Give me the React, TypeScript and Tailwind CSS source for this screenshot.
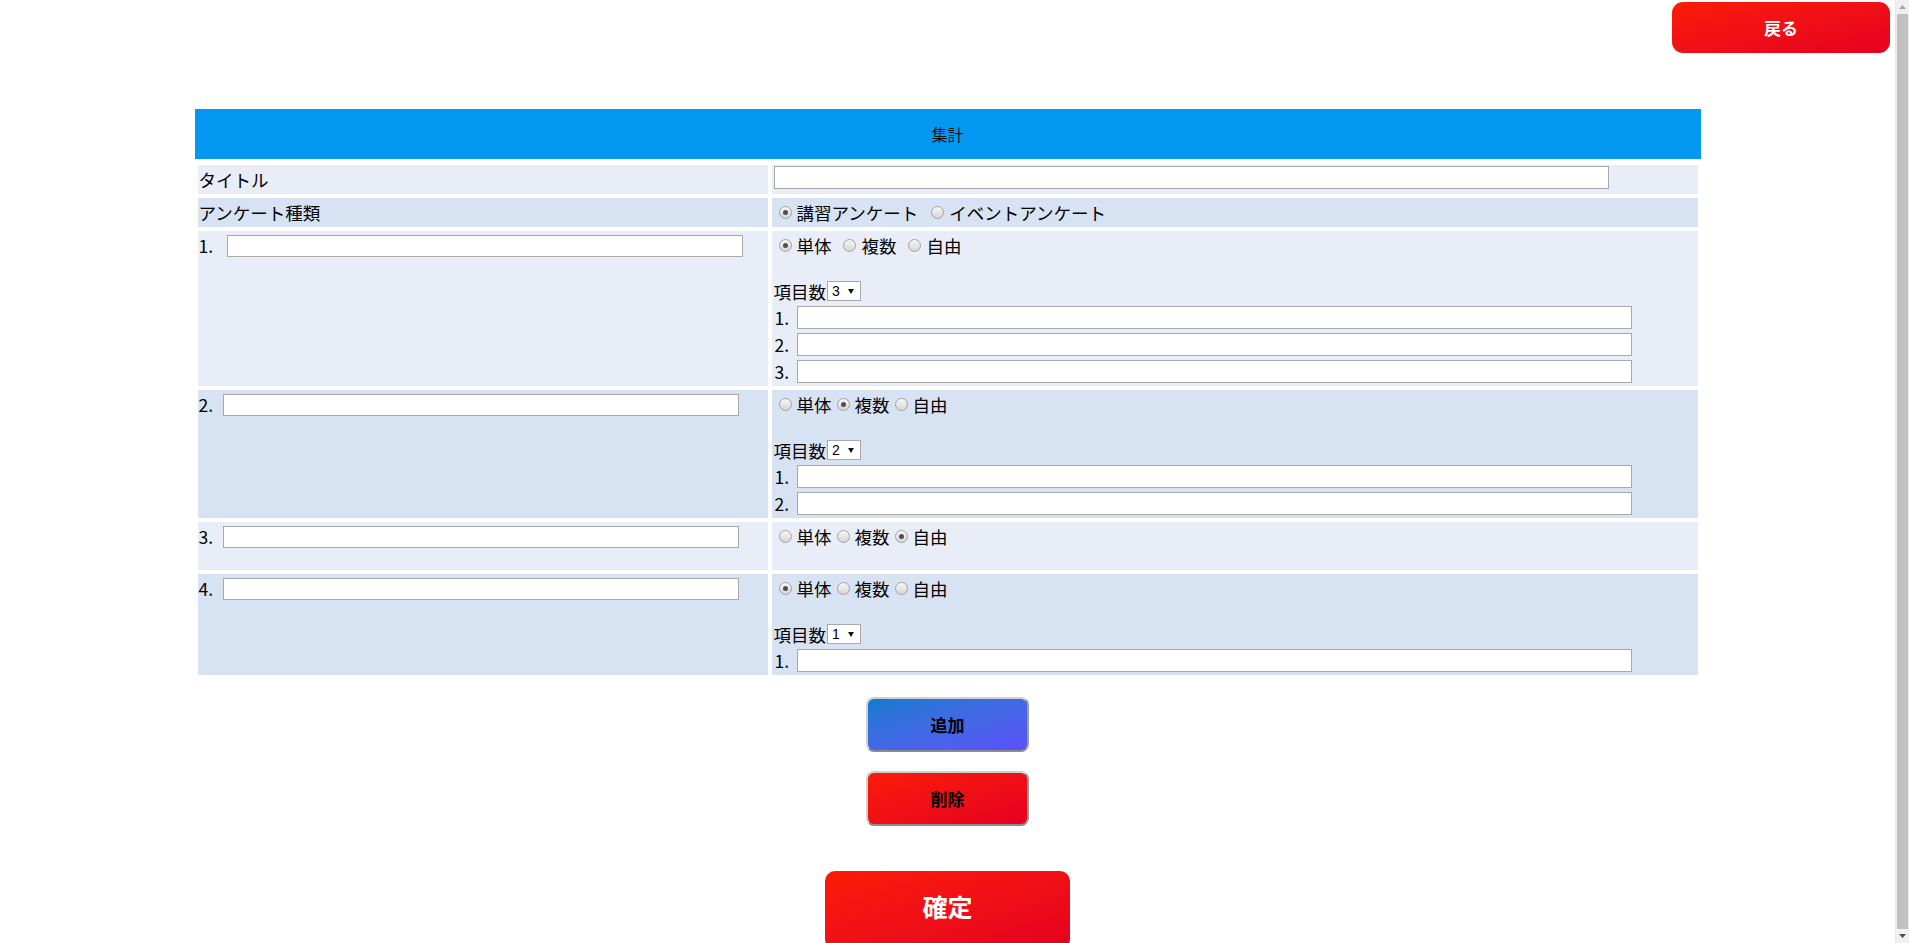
import React from "react";

const font = { fontFamily: '"Noto Sans CJK JP", "Noto Sans", sans-serif' };

const Radio = ({ checked = false, className = "" }: { checked?: boolean; className?: string }) => (
  <span
    className={
      "flex shrink-0 w-[13px] h-[13px] rounded-full border border-[#a3a3a3] bg-linear-to-b from-[#f7f7f7] to-[#d6d6d6] items-center justify-center " +
      className
    }
  >
    {checked && <span className="w-[5px] h-[5px] rounded-full bg-[#505050]" />}
  </span>
);

const TextInput = ({ className = "" }: { className?: string }) => (
  <span className={"block shrink-0 bg-white border border-[#a9a9a9] " + className} />
);

const CountSelect = ({ value }: { value: number }) => (
  <span className="flex items-center w-[34px] h-[20px] bg-white border border-[#a9a9a9] pl-[4px] ml-[1px]">
    <span className="text-[14px] leading-none" style={{ fontFamily: '"Liberation Sans", Arial, sans-serif' }}>
      {value}
    </span>
    <svg className="ml-[8px]" width="6" height="5" viewBox="0 0 6 5">
      <path d="M0 0 H6 L3 5 Z" fill="#111" />
    </svg>
  </span>
);

type Kind = 0 | 1 | 2;

interface Question {
  kind: Kind;
  count: number;
  spaced: boolean;
  labelWidth: string;
}

const questions: Question[] = [
  { kind: 0, count: 3, spaced: true, labelWidth: "w-[28px]" },
  { kind: 1, count: 2, spaced: false, labelWidth: "w-[24px]" },
  { kind: 2, count: 0, spaced: false, labelWidth: "w-[24px]" },
  { kind: 0, count: 1, spaced: false, labelWidth: "w-[24px]" },
];

const kinds = ["単体", "複数", "自由"];

const RedGradient = "bg-linear-to-br from-[#fb1b05] to-[#e5001f]";

export default function App() {
  return (
    <div className="flex h-screen overflow-hidden bg-white text-black" style={font}>
      <div className="flex-1 min-w-0">
        {/* top bar */}
        <div className="flex justify-end pt-[2px] pr-[5px]">
          <button
            className={`w-[218px] h-[51px] rounded-[11px] ${RedGradient} text-white font-bold text-[17px]`}
          >
            戻る
          </button>
        </div>

        {/* header */}
        <div className="mt-[56px] mx-auto w-[1506px] h-[50px] bg-[#0399f3] flex items-center justify-center text-[16px] text-[#111]">
          集計
        </div>

        <table className="mt-[2px] mx-auto w-[1508px] border-separate border-spacing-[4px] text-[17.5px] leading-[27px]">
          <tbody>
            <tr className="bg-[#e8edf7]">
              <td className="w-[570px] p-[1px] align-middle">
                <div className="h-[27px] flex items-center">タイトル</div>
              </td>
              <td className="p-[1px] align-top">
                <div className="h-[27px]">
                  <TextInput className="ml-[1px] w-[835px] h-[23px]" />
                </div>
              </td>
            </tr>
            <tr className="bg-[#d7e2f3]">
              <td className="p-[1px] align-middle">
                <div className="h-[27px] flex items-center">アンケート種類</div>
              </td>
              <td className="p-[1px] align-middle">
                <div className="h-[27px] flex items-center">
                  <Radio checked className="ml-[6px] mr-[5px]" />
                  <span>講習アンケート</span>
                  <Radio className="ml-[13px] mr-[5px]" />
                  <span>イベントアンケート</span>
                </div>
              </td>
            </tr>
            {questions.map((q, i) => (
              <tr key={i} className={i % 2 === 0 ? "bg-[#e8edf7]" : "bg-[#d7e2f3]"}>
                <td className="p-[1px] align-top">
                  <div className="h-[27px] flex items-center">
                    <span className={q.labelWidth}>{i + 1}.</span>
                    <TextInput className="w-[516px] h-[22px]" />
                  </div>
                </td>
                <td className="p-[1px] align-top">
                  <div className="h-[27px] flex items-center">
                    {kinds.map((k, j) => (
                      <React.Fragment key={k}>
                        <Radio
                          checked={q.kind === j}
                          className={
                            j === 0
                              ? "ml-[6px] mr-[5px]"
                              : q.spaced
                              ? "ml-[11px] mr-[6px]"
                              : "ml-[5px] mr-[5px]"
                          }
                        />
                        <span>{k}</span>
                      </React.Fragment>
                    ))}
                  </div>
                  <div className="h-[19px]" />
                  {q.count > 0 && (
                    <>
                      <div className="h-[26px] flex items-center pl-[1px]">
                        <span>項目数</span>
                        <CountSelect value={q.count} />
                      </div>
                      {Array.from({ length: q.count }).map((_, n) => (
                        <div key={n} className="h-[27px] flex items-center">
                          <span className="w-[24px] pl-[2px]">{n + 1}.</span>
                          <TextInput className="w-[835px] h-[23px]" />
                        </div>
                      ))}
                    </>
                  )}
                </td>
              </tr>
            ))}
          </tbody>
        </table>

        {/* actions */}
        <div className="flex flex-col items-center mt-[18px]">
          <button className="w-[163px] h-[55px] rounded-[8px] border-2 border-[#cfcfcf] border-b-[#8c8c8c] border-r-[#9a9a9a] bg-linear-to-br from-[#0a7bd0] to-[#5b50fa] font-bold text-[17px] text-black">
            追加
          </button>
          <button
            className={`mt-[19px] w-[163px] h-[55px] rounded-[8px] border-2 border-[#cfcfcf] border-b-[#8c8c8c] border-r-[#9a9a9a] ${RedGradient} font-bold text-[17px] text-black`}
          >
            削除
          </button>
          <button className={`mt-[45px] shrink-0 w-[245px] h-[78px] rounded-[10px] ${RedGradient} text-white font-bold text-[25px] pb-[6px]`}>
            確定
          </button>
        </div>
      </div>

      {/* page scrollbar */}
      <div className="w-[14px] shrink-0 flex flex-col bg-[#f0f0f0] border-l border-[#e6e6e6]">
        <div className="h-[14px] flex items-center justify-center">
          <svg width="7" height="4" viewBox="0 0 7 4">
            <path d="M0 4 L3.5 0 L7 4 Z" fill="#a3a3a3" />
          </svg>
        </div>
        <div className="flex-1 mx-[1px] bg-[#c1c1c1]" />
        <div className="h-[14px] flex items-center justify-center">
          <svg width="7" height="4" viewBox="0 0 7 4">
            <path d="M0 0 L3.5 4 L7 0 Z" fill="#505050" />
          </svg>
        </div>
      </div>
    </div>
  );
}
